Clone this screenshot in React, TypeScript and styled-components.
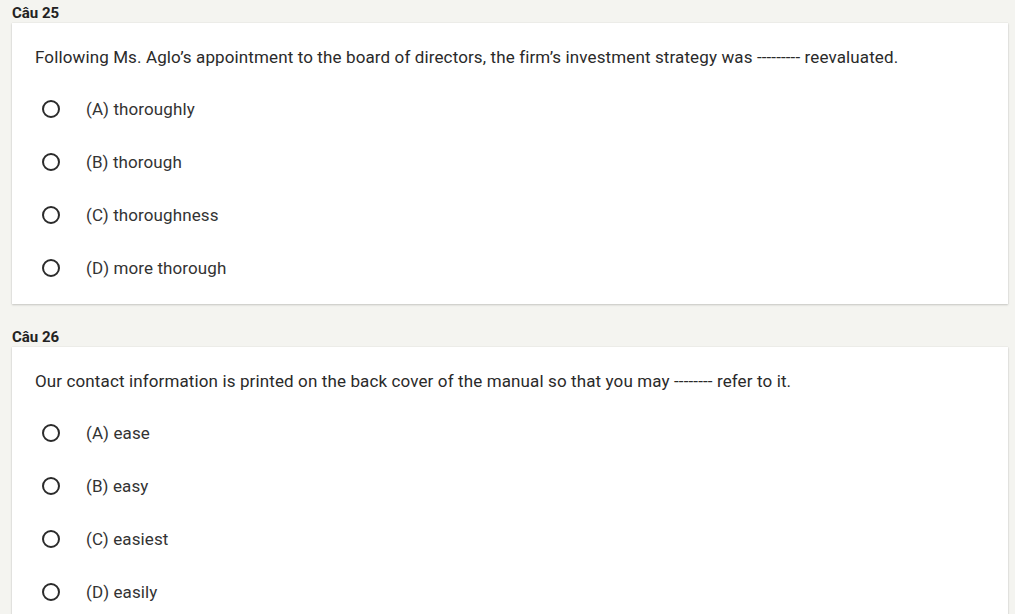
import React from "react";
import styled, { createGlobalStyle } from "styled-components";

const Global = createGlobalStyle`
  html, body { margin: 0; padding: 0; background: #f4f4f0; }
  body { font-family: Roboto, "Noto Sans", Arial, sans-serif; }
`;

const Page = styled.div`
  padding: 3px 7px 0 12px;
  display: flex;
  flex-direction: column;
  gap: 23px;
`;

const Section = styled.section`
  display: flex;
  flex-direction: column;
`;

const Label = styled.div`
  font-size: 15px;
  line-height: 20px;
  font-weight: 700;
  color: #222;
`;

const Card = styled.div`
  background: #fff;
  box-shadow: 0 1px 2px rgba(0, 0, 0, 0.18), 0 0 1px rgba(0, 0, 0, 0.12);
  padding: 22px 23px 10px 23px;
`;

const Question = styled.div`
  font-size: 17px;
  line-height: 24px;
  letter-spacing: 0.12px;
  color: #2a2a2a;
  margin-bottom: 13px;
`;

const Option = styled.label`
  display: flex;
  align-items: center;
  height: 53px;
  padding-left: 7px;
  font-size: 17px;
  letter-spacing: 0.1px;
  color: #333;
  cursor: pointer;
`;

const Radio = styled.span`
  width: 18px;
  height: 18px;
  box-sizing: border-box;
  border: 2px solid #2b2b2b;
  border-radius: 50%;
  margin-right: 26px;
  flex: none;
`;

const data = [
  {
    label: "Câu 25",
    q: "Following Ms. Aglo’s appointment to the board of directors, the firm’s investment strategy was --------- reevaluated.",
    opts: ["(A) thoroughly", "(B) thorough", "(C) thoroughness", "(D) more thorough"],
  },
  {
    label: "Câu 26",
    q: "Our contact information is printed on the back cover of the manual so that you may -------- refer to it.",
    opts: ["(A) ease", "(B) easy", "(C) easiest", "(D) easily"],
  },
];

export default function App() {
  return (
    <>
      <Global />
      <Page>
        {data.map((d) => (
          <Section key={d.label}>
            <Label>{d.label}</Label>
            <Card>
              <Question>{d.q}</Question>
              {d.opts.map((o) => (
                <Option key={o}>
                  <Radio />
                  {o}
                </Option>
              ))}
            </Card>
          </Section>
        ))}
      </Page>
    </>
  );
}
